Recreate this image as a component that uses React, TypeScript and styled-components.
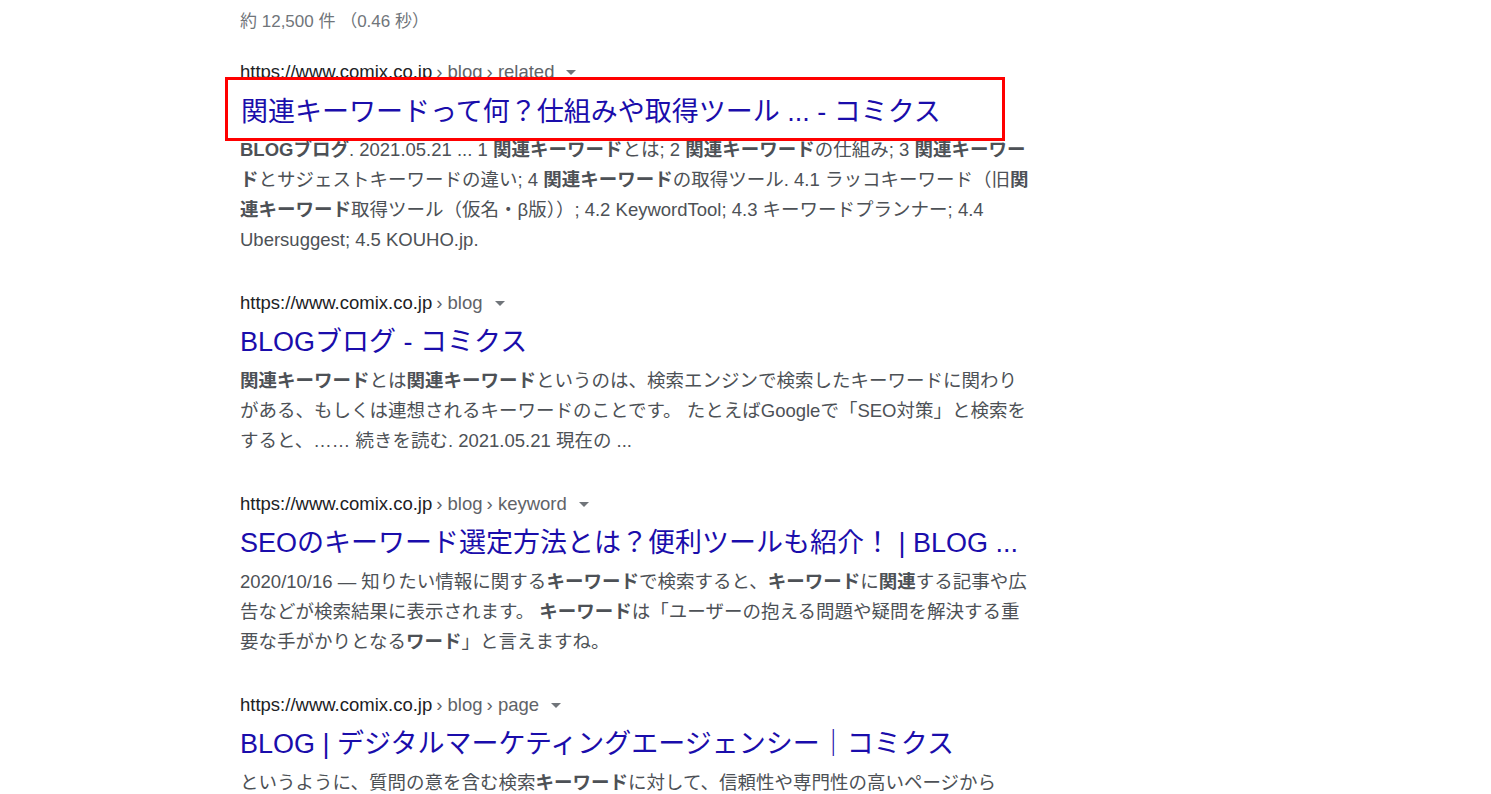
import React from "react";
import styled, { createGlobalStyle } from "styled-components";

const Global = createGlobalStyle`
  html, body { margin: 0; padding: 0; background: #fff; }
  body { font-family: "Liberation Sans", Arial, "Noto Sans CJK JP", sans-serif; }
`;

const Page = styled.div`
  padding: 8px 0 0 240px;
  width: 820px;
`;

const Stats = styled.div`
  font-size: 17px;
  color: #70757a;
  line-height: 28px;
  margin-bottom: 24px;
`;

const Result = styled.div`
  position: relative;
  margin-bottom: 36px;
`;

const Url = styled.div`
  font-size: 18.5px;
  line-height: 24px;
  color: #202124;
  display: flex;
  align-items: center;
  gap: 4px;
  white-space: nowrap;
  span { color: #5f6368; }
`;

const Caret = styled.span`
  display: inline-block;
  margin-left: 8px;
  width: 0;
  height: 0;
  border-left: 5px solid transparent;
  border-right: 5px solid transparent;
  border-top: 5px solid #70757a;
`;

const Title = styled.div`
  font-size: 27px;
  line-height: 36px;
  color: #1a0dab;
  margin: 9px 0 6px;
  white-space: nowrap;
`;

const Snippet = styled.div`
  font-size: 18.5px;
  line-height: 30px;
  color: #4d5156;
  white-space: nowrap;
  b { color: #4d5156; font-weight: 700; }
`;

const Highlight = styled.div`
  position: absolute;
  left: -15px;
  top: 17px;
  width: 761px;
  height: 58px;
  border: 3px solid #f00;
  background: #fff;
  display: flex;
  align-items: center;
  padding-left: 13px;
  font-size: 27px;
  color: #1a0dab;
  white-space: nowrap;
`;

const UrlLine = ({ path }: { path: string[] }) => (
  <Url>
    https://www.comix.co.jp
    {path.map((p) => (
      <span key={p}>› {p}</span>
    ))}
    <Caret />
  </Url>
);

export default function App() {
  return (
    <>
      <Global />
      <Page>
        <Stats>約 12,500 件 （0.46 秒）</Stats>
        <Result>
          <UrlLine path={["blog", "related"]} />
          <Title>関連キーワードって何？仕組みや取得ツール ... - コミクス</Title>
          <Snippet>
            <b>BLOGブログ</b>. 2021.05.21 ... 1 <b>関連キーワード</b>とは; 2 <b>関連キーワード</b>の仕組み; 3 <b>関連キーワー</b>
            <br />
            <b>ド</b>とサジェストキーワードの違い; 4 <b>関連キーワード</b>の取得ツール. 4.1 ラッコキーワード（旧<b>関</b>
            <br />
            <b>連キーワード</b>取得ツール（仮名・β版））; 4.2 KeywordTool; 4.3 キーワードプランナー; 4.4
            <br />
            Ubersuggest; 4.5 KOUHO.jp.
          </Snippet>
          <Highlight>関連キーワードって何？仕組みや取得ツール ... - コミクス</Highlight>
        </Result>
        <Result>
          <UrlLine path={["blog"]} />
          <Title>BLOGブログ - コミクス</Title>
          <Snippet>
            <b>関連キーワード</b>とは<b>関連キーワード</b>というのは、検索エンジンで検索したキーワードに関わり
            <br />
            がある、もしくは連想されるキーワードのことです。 たとえばGoogleで「SEO対策」と検索を
            <br />
            すると、…… 続きを読む. 2021.05.21 現在の ...
          </Snippet>
        </Result>
        <Result>
          <UrlLine path={["blog", "keyword"]} />
          <Title>SEOのキーワード選定方法とは？便利ツールも紹介！ | BLOG ...</Title>
          <Snippet>
            2020/10/16 — 知りたい情報に関する<b>キーワード</b>で検索すると、<b>キーワード</b>に<b>関連</b>する記事や広
            <br />
            告などが検索結果に表示されます。 <b>キーワード</b>は「ユーザーの抱える問題や疑問を解決する重
            <br />
            要な手がかりとなる<b>ワード</b>」と言えますね。
          </Snippet>
        </Result>
        <Result>
          <UrlLine path={["blog", "page"]} />
          <Title>BLOG | デジタルマーケティングエージェンシー｜コミクス</Title>
          <Snippet>
            というように、質問の意を含む検索<b>キーワード</b>に対して、信頼性や専門性の高いページから
          </Snippet>
        </Result>
      </Page>
    </>
  );
}
